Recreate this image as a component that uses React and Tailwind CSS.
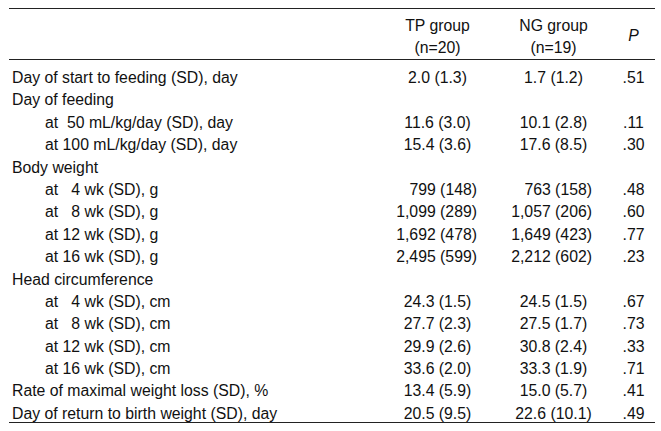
const rows = [
  { label: "Day of start to feeding (SD), day", tp: "2.0 (1.3)", ng: "1.7 (1.2)", p: ".51" },
  { label: "Day of feeding" },
  { label: "at\u00a0\u00a050 mL/kg/day (SD), day", indent: true, tp: "11.6 (3.0)", ng: "10.1 (2.8)", p: ".11" },
  { label: "at 100 mL/kg/day (SD), day", indent: true, tp: "15.4 (3.6)", ng: "17.6 (8.5)", p: ".30" },
  { label: "Body weight" },
  { label: "at\u00a0\u00a0\u00a04 wk (SD), g", indent: true, tp: "799 (148)", ng: "763 (158)", p: ".48", right: true },
  { label: "at\u00a0\u00a0\u00a08 wk (SD), g", indent: true, tp: "1,099 (289)", ng: "1,057 (206)", p: ".60", right: true },
  { label: "at 12 wk (SD), g", indent: true, tp: "1,692 (478)", ng: "1,649 (423)", p: ".77", right: true },
  { label: "at 16 wk (SD), g", indent: true, tp: "2,495 (599)", ng: "2,212 (602)", p: ".23", right: true },
  { label: "Head circumference" },
  { label: "at\u00a0\u00a0\u00a04 wk (SD), cm", indent: true, tp: "24.3 (1.5)", ng: "24.5 (1.5)", p: ".67" },
  { label: "at\u00a0\u00a0\u00a08 wk (SD), cm", indent: true, tp: "27.7 (2.3)", ng: "27.5 (1.7)", p: ".73" },
  { label: "at 12 wk (SD), cm", indent: true, tp: "29.9 (2.6)", ng: "30.8 (2.4)", p: ".33" },
  { label: "at 16 wk (SD), cm", indent: true, tp: "33.6 (2.0)", ng: "33.3 (1.9)", p: ".71" },
  { label: "Rate of maximal weight loss (SD), %", tp: "13.4 (5.9)", ng: "15.0 (5.7)", p: ".41" },
  { label: "Day of return to birth weight (SD), day", tp: "20.5 (9.5)", ng: "22.6 (10.1)", p: ".49" },
];

export default function App() {
  return (
    <div className="w-[661px] h-[431px] bg-white text-[#111] text-[15.8px] font-['Liberation_Sans',Arial,sans-serif] pt-[8px] pl-[9px]">
      <div className="w-[646px]">
        {/* header */}
        <div className="flex border-t border-b border-[#222] h-[52px]">
          <div className="flex-1"></div>
          <div className="w-[115px] flex flex-col items-center pt-[6px] leading-[22px]">
            <span>TP group</span>
            <span>(n=20)</span>
          </div>
          <div className="w-[117px] flex flex-col items-center pt-[6px] leading-[22px]">
            <span>NG group</span>
            <span>(n=19)</span>
          </div>
          <div className="w-[43px] flex items-center justify-center italic pt-[3px]">P</div>
        </div>

        {/* body */}
        <div className="pt-[7px] border-b border-[#222] h-[363px]">
          {rows.map((r, i) => (
            <div key={i} className="flex h-[22.4px] leading-[22.4px] whitespace-pre">
              <div className={"flex-1 " + (r.indent ? "pl-[36px]" : "pl-[3px]")}>{r.label}</div>
              <div className={"w-[115px] " + (r.right ? "text-right pr-[18px]" : "text-center")}>{r.tp}</div>
              <div className={"w-[117px] " + (r.right ? "text-right pr-[20px]" : "text-center")}>{r.ng}</div>
              <div className="w-[43px] text-center">{r.p}</div>
            </div>
          ))}
        </div>
      </div>
    </div>
  );
}
